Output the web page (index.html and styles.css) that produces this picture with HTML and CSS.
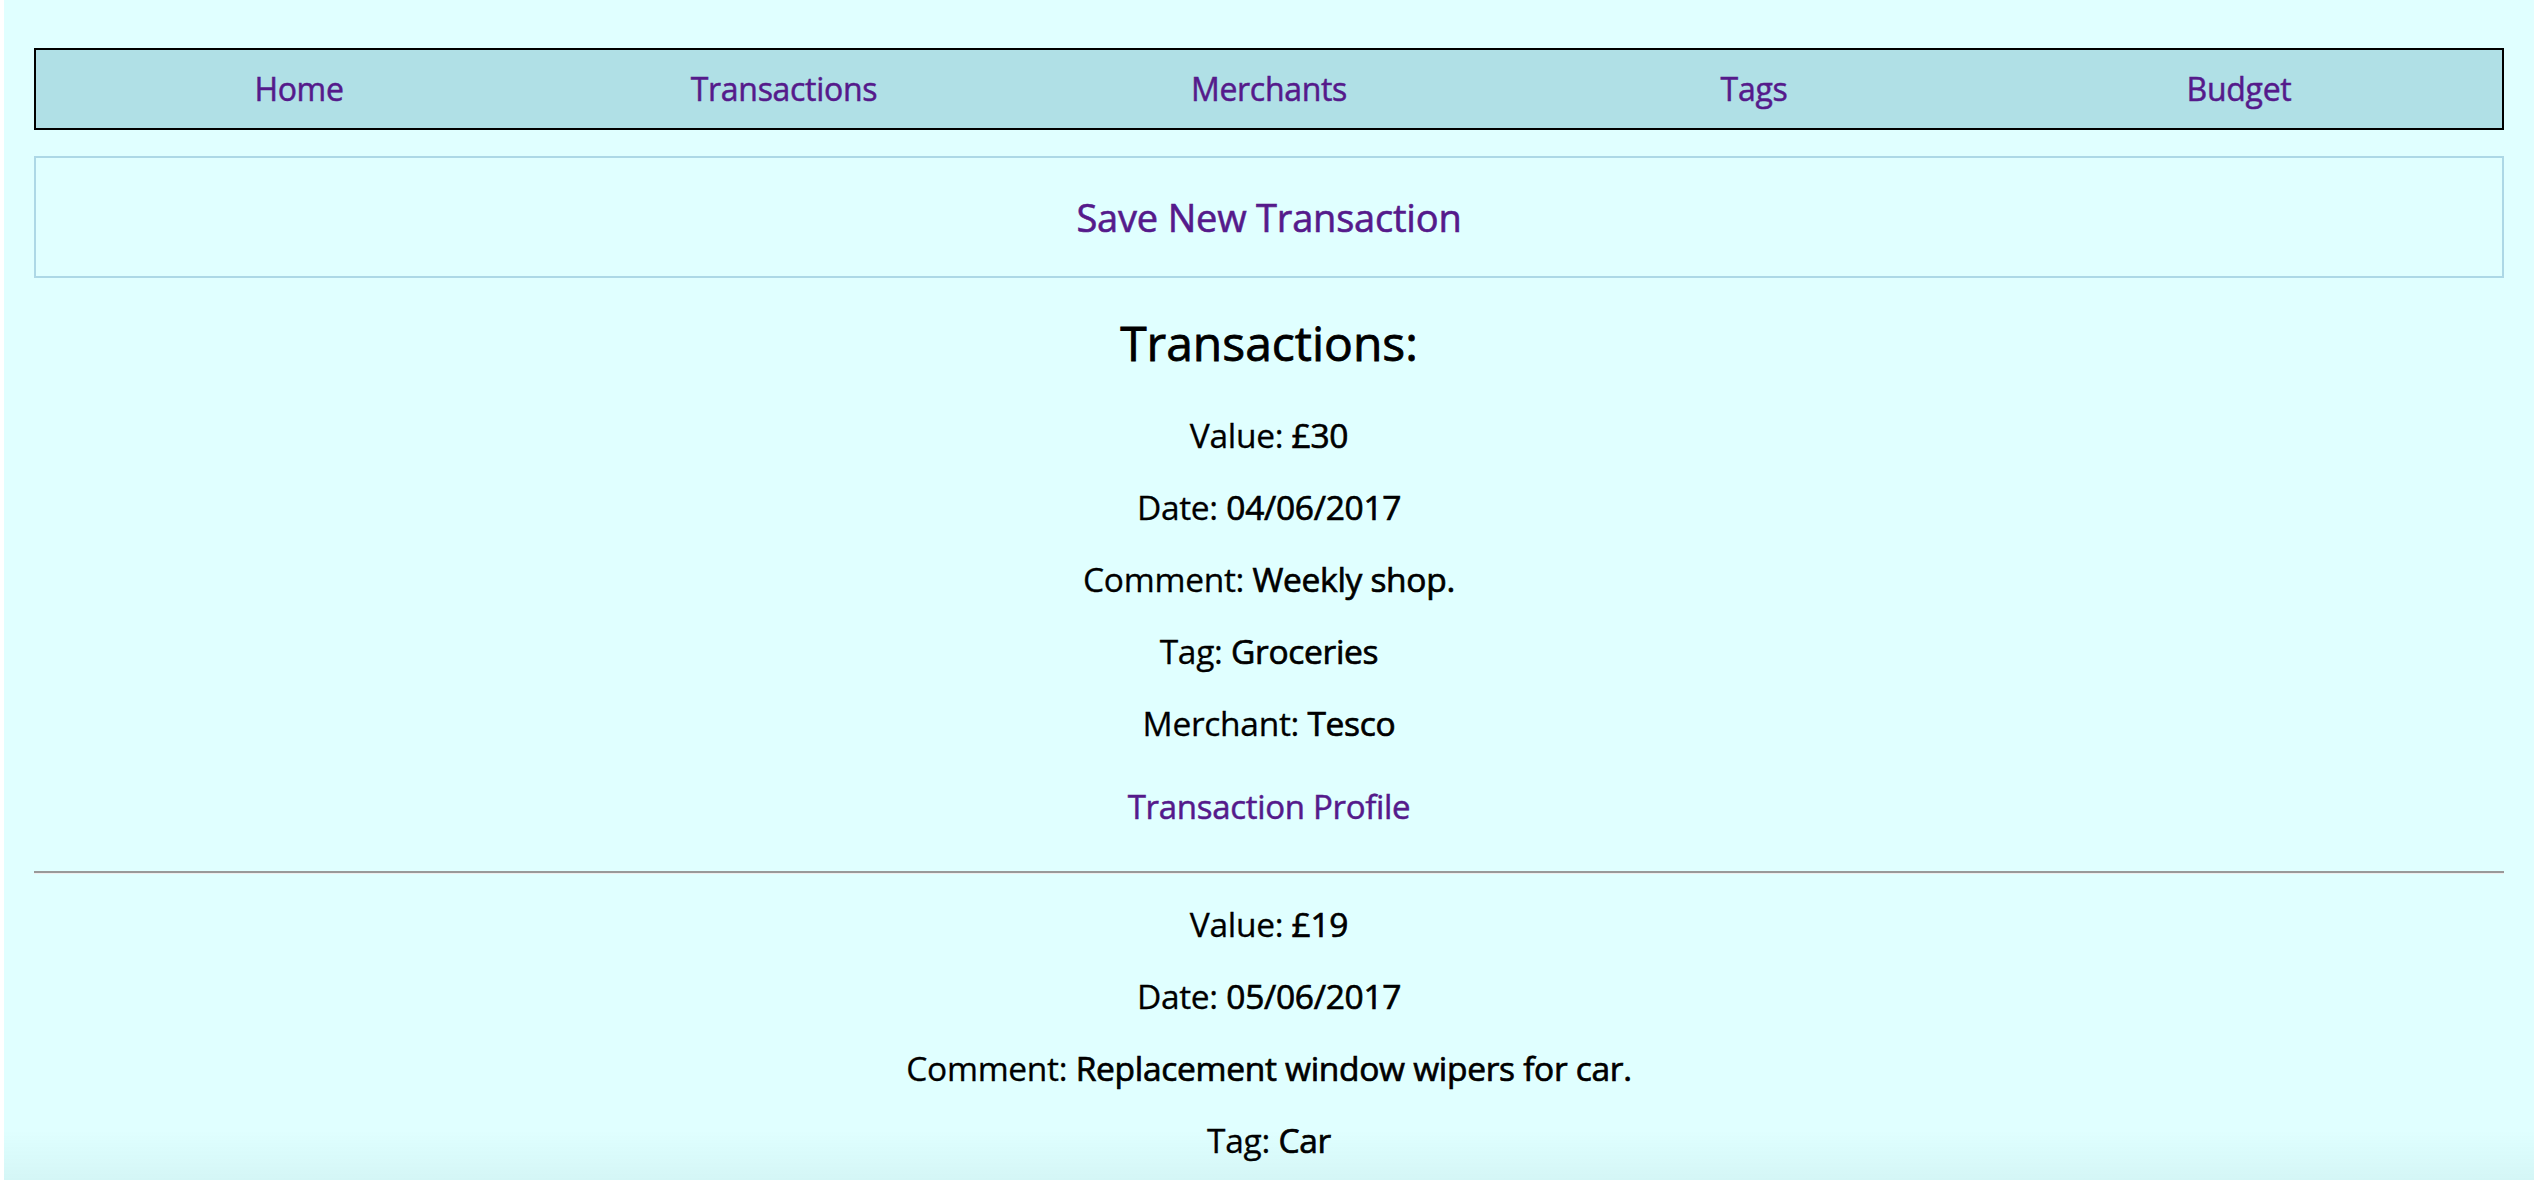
FILE: index.html
```html
<!DOCTYPE html>
<html lang="en">
<head>
<meta charset="utf-8">
<title>Transactions</title>
<link rel="stylesheet" href="styles.css">
</head>
<body>
<div class="page">
  <nav class="nav">
    <a class="nav-link" href="#">Home</a>
    <a class="nav-link" href="#">Transactions</a>
    <a class="nav-link" href="#">Merchants</a>
    <a class="nav-link" href="#">Tags</a>
    <a class="nav-link" href="#">Budget</a>
  </nav>
  <div class="save-box">
    <a class="save-link" href="#">Save New Transaction</a>
  </div>
  <h2 class="title">Transactions:</h2>
  <section class="transaction">
    <p class="field">Value: <span class="val">£30</span></p>
    <p class="field">Date: <span class="val">04/06/2017</span></p>
    <p class="field">Comment: <span class="val">Weekly shop.</span></p>
    <p class="field">Tag: <span class="val">Groceries</span></p>
    <p class="field">Merchant: <span class="val">Tesco</span></p>
    <a class="profile-link" href="#">Transaction Profile</a>
  </section>
  <hr class="divider">
  <section class="transaction transaction-next">
    <p class="field">Value: <span class="val">£19</span></p>
    <p class="field">Date: <span class="val">05/06/2017</span></p>
    <p class="field">Comment: <span class="val">Replacement window wipers for car.</span></p>
    <p class="field">Tag: <span class="val">Car</span></p>
  </section>
</div>
<div class="shade"></div>
</body>
</html>
```
FILE: styles.css
```css
html {
  background: #ffffff;
}
body {
  margin: 0 6px 0 4px;
  font-family: "Open Sans", "Noto Sans", sans-serif;
  color: #000;
  overflow: hidden;
  height: 1180px;
}
.page {
  background: #e0ffff;
  height: 1180px;
  padding: 48px 30px 0 30px;
  box-sizing: border-box;
}
.nav {
  display: grid;
  grid-template-columns: repeat(5, 485px);
  justify-content: center;
  align-items: center;
  height: 82px;
  background: #b0e0e6;
  border: 2px solid #000;
  box-sizing: border-box;
}
.nav-link {
  text-align: center;
  color: #551a8b;
  text-decoration: none;
  font-size: 32px;
  letter-spacing: -0.3px;
  margin-top: -2px;
  -webkit-text-stroke: 0.5px #551a8b;
}
.save-box {
  margin-top: 26px;
  height: 122px;
  border: 2px solid #add8e6;
  box-sizing: border-box;
  display: flex;
  align-items: center;
  justify-content: center;
}
.save-link {
  color: #551a8b;
  text-decoration: none;
  font-size: 38px;
  letter-spacing: -0.2px;
  -webkit-text-stroke: 0.6px #551a8b;
}
.title {
  margin: 33px 0 0 0;
  text-align: center;
  font-size: 48px;
  line-height: 64px;
  font-weight: 400;
  -webkit-text-stroke: 0.8px #000;
}
.transaction {
  display: flex;
  flex-direction: column;
  align-items: center;
  gap: 32px;
  margin-top: 40px;
}
.transaction-next {
  margin-top: 30px;
}
.field {
  margin: 0;
  font-size: 33.5px;
  line-height: 40px;
  letter-spacing: -0.3px;
  -webkit-text-stroke: 0.3px #000;
}
.val {
  -webkit-text-stroke: 0.7px #000;
}
.profile-link {
  margin-top: 12px;
  color: #551a8b;
  text-decoration: none;
  font-size: 33px;
  line-height: 40px;
  letter-spacing: -0.3px;
  -webkit-text-stroke: 0.5px #551a8b;
}
.divider {
  margin: 44px 0 0 0;
  border: 0;
  border-top: 2px solid #999;
  border-bottom: 1px solid #eee;
  height: 0;
}
.shade {
  position: fixed;
  left: 4px;
  right: 6px;
  bottom: 0;
  height: 50px;
  background: linear-gradient(to bottom, rgba(0, 80, 80, 0), rgba(0, 80, 80, 0.05));
  pointer-events: none;
}
```
